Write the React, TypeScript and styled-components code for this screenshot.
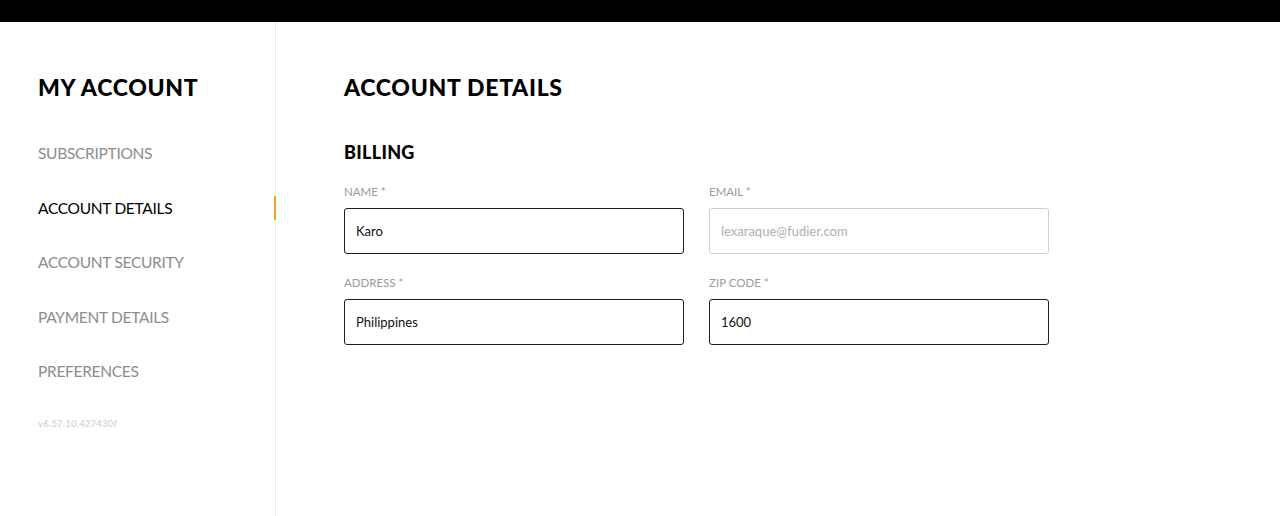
import React from 'react'
import styled, { createGlobalStyle } from 'styled-components'

const GlobalStyle = createGlobalStyle`
  html, body {
    margin: 0;
    padding: 0;
    background: #fff;
    font-family: Lato, "Noto Sans", "Liberation Sans", sans-serif;
    color: #000;
  }
`;

const TopBar = styled.div`
  height: 22px;
  background: #000;
`;

const Layout = styled.div`
  display: flex;
  height: 494px;
`;

const Sidebar = styled.aside`
  width: 276px;
  flex: 0 0 276px;
  border-right: 1px solid #ececec;
  padding: 50px 0 0 38px;
  box-sizing: border-box;
`;

const Title = styled.h1`
  margin: 0;
  font-size: 23px;
  line-height: 30px;
  font-weight: 900;
  letter-spacing: 0.7px;
`;

const Nav = styled.nav`
  margin-top: 24px;
  display: flex;
  flex-direction: column;
`;

const NavItem = styled.a<{ $active?: boolean }>`
  position: relative;
  height: 54.5px;
  display: flex;
  align-items: center;
  font-size: 15.5px;
  letter-spacing: -0.3px;
  text-transform: uppercase;
  color: ${p => (p.$active ? '#000' : '#8c8c8c')};
  cursor: pointer;

  &::after {
    content: '';
    display: ${p => (p.$active ? 'block' : 'none')};
    position: absolute;
    right: -1px;
    top: 15px;
    width: 2px;
    height: 24px;
    background: #f5a623;
  }
`;

const Version = styled.div`
  margin-top: 19px;
  font-size: 9.5px;
  line-height: 12px;
  font-weight: 700;
  letter-spacing: 0.2px;
  color: #d6d6d6;
`;

const Main = styled.main`
  flex: 1;
  padding: 50px 0 0 68px;
`;

const SectionTitle = styled.h2`
  margin: 38px 0 0;
  font-size: 18px;
  line-height: 24px;
  font-weight: 900;
  letter-spacing: 0.3px;
`;

const FormGrid = styled.div`
  margin-top: 21px;
  display: grid;
  grid-template-columns: 340px 340px;
  column-gap: 25px;
  row-gap: 22px;
`;

const Field = styled.label`
  display: flex;
  flex-direction: column;
  gap: 9px;
`;

const Label = styled.span`
  font-size: 11.5px;
  line-height: 14px;
  color: #9a9a9a;
  text-transform: uppercase;
`;

const Input = styled.input`
  height: 46px;
  box-sizing: border-box;
  border: 1px solid #1e1e1e;
  border-radius: 3px;
  padding: 0 11px;
  font-family: inherit;
  font-size: 13px;
  color: #111;
  background: #fff;
  outline: none;

  &:disabled {
    border-color: #cfcfcf;
    color: #b0b0b0;
  }
`;

const navItems = ['Subscriptions', 'Account Details', 'Account Security', 'Payment Details', 'Preferences']

export default function App() {
  return (
    <>
      <GlobalStyle />
      <TopBar />
      <Layout>
        <Sidebar>
          <Title>MY ACCOUNT</Title>
          <Nav>
            {navItems.map(item => (
              <NavItem key={item} $active={item === 'Account Details'}>
                {item}
              </NavItem>
            ))}
          </Nav>
          <Version>v6.57.10.427430f</Version>
        </Sidebar>
        <Main>
          <Title>ACCOUNT DETAILS</Title>
          <SectionTitle>BILLING</SectionTitle>
          <FormGrid>
            <Field>
              <Label>Name *</Label>
              <Input defaultValue="Karo" />
            </Field>
            <Field>
              <Label>Email *</Label>
              <Input defaultValue="lexaraque@fudier.com" disabled />
            </Field>
            <Field>
              <Label>Address *</Label>
              <Input defaultValue="Philippines" />
            </Field>
            <Field>
              <Label>Zip Code *</Label>
              <Input defaultValue="1600" />
            </Field>
          </FormGrid>
        </Main>
      </Layout>
    </>
  )
}
